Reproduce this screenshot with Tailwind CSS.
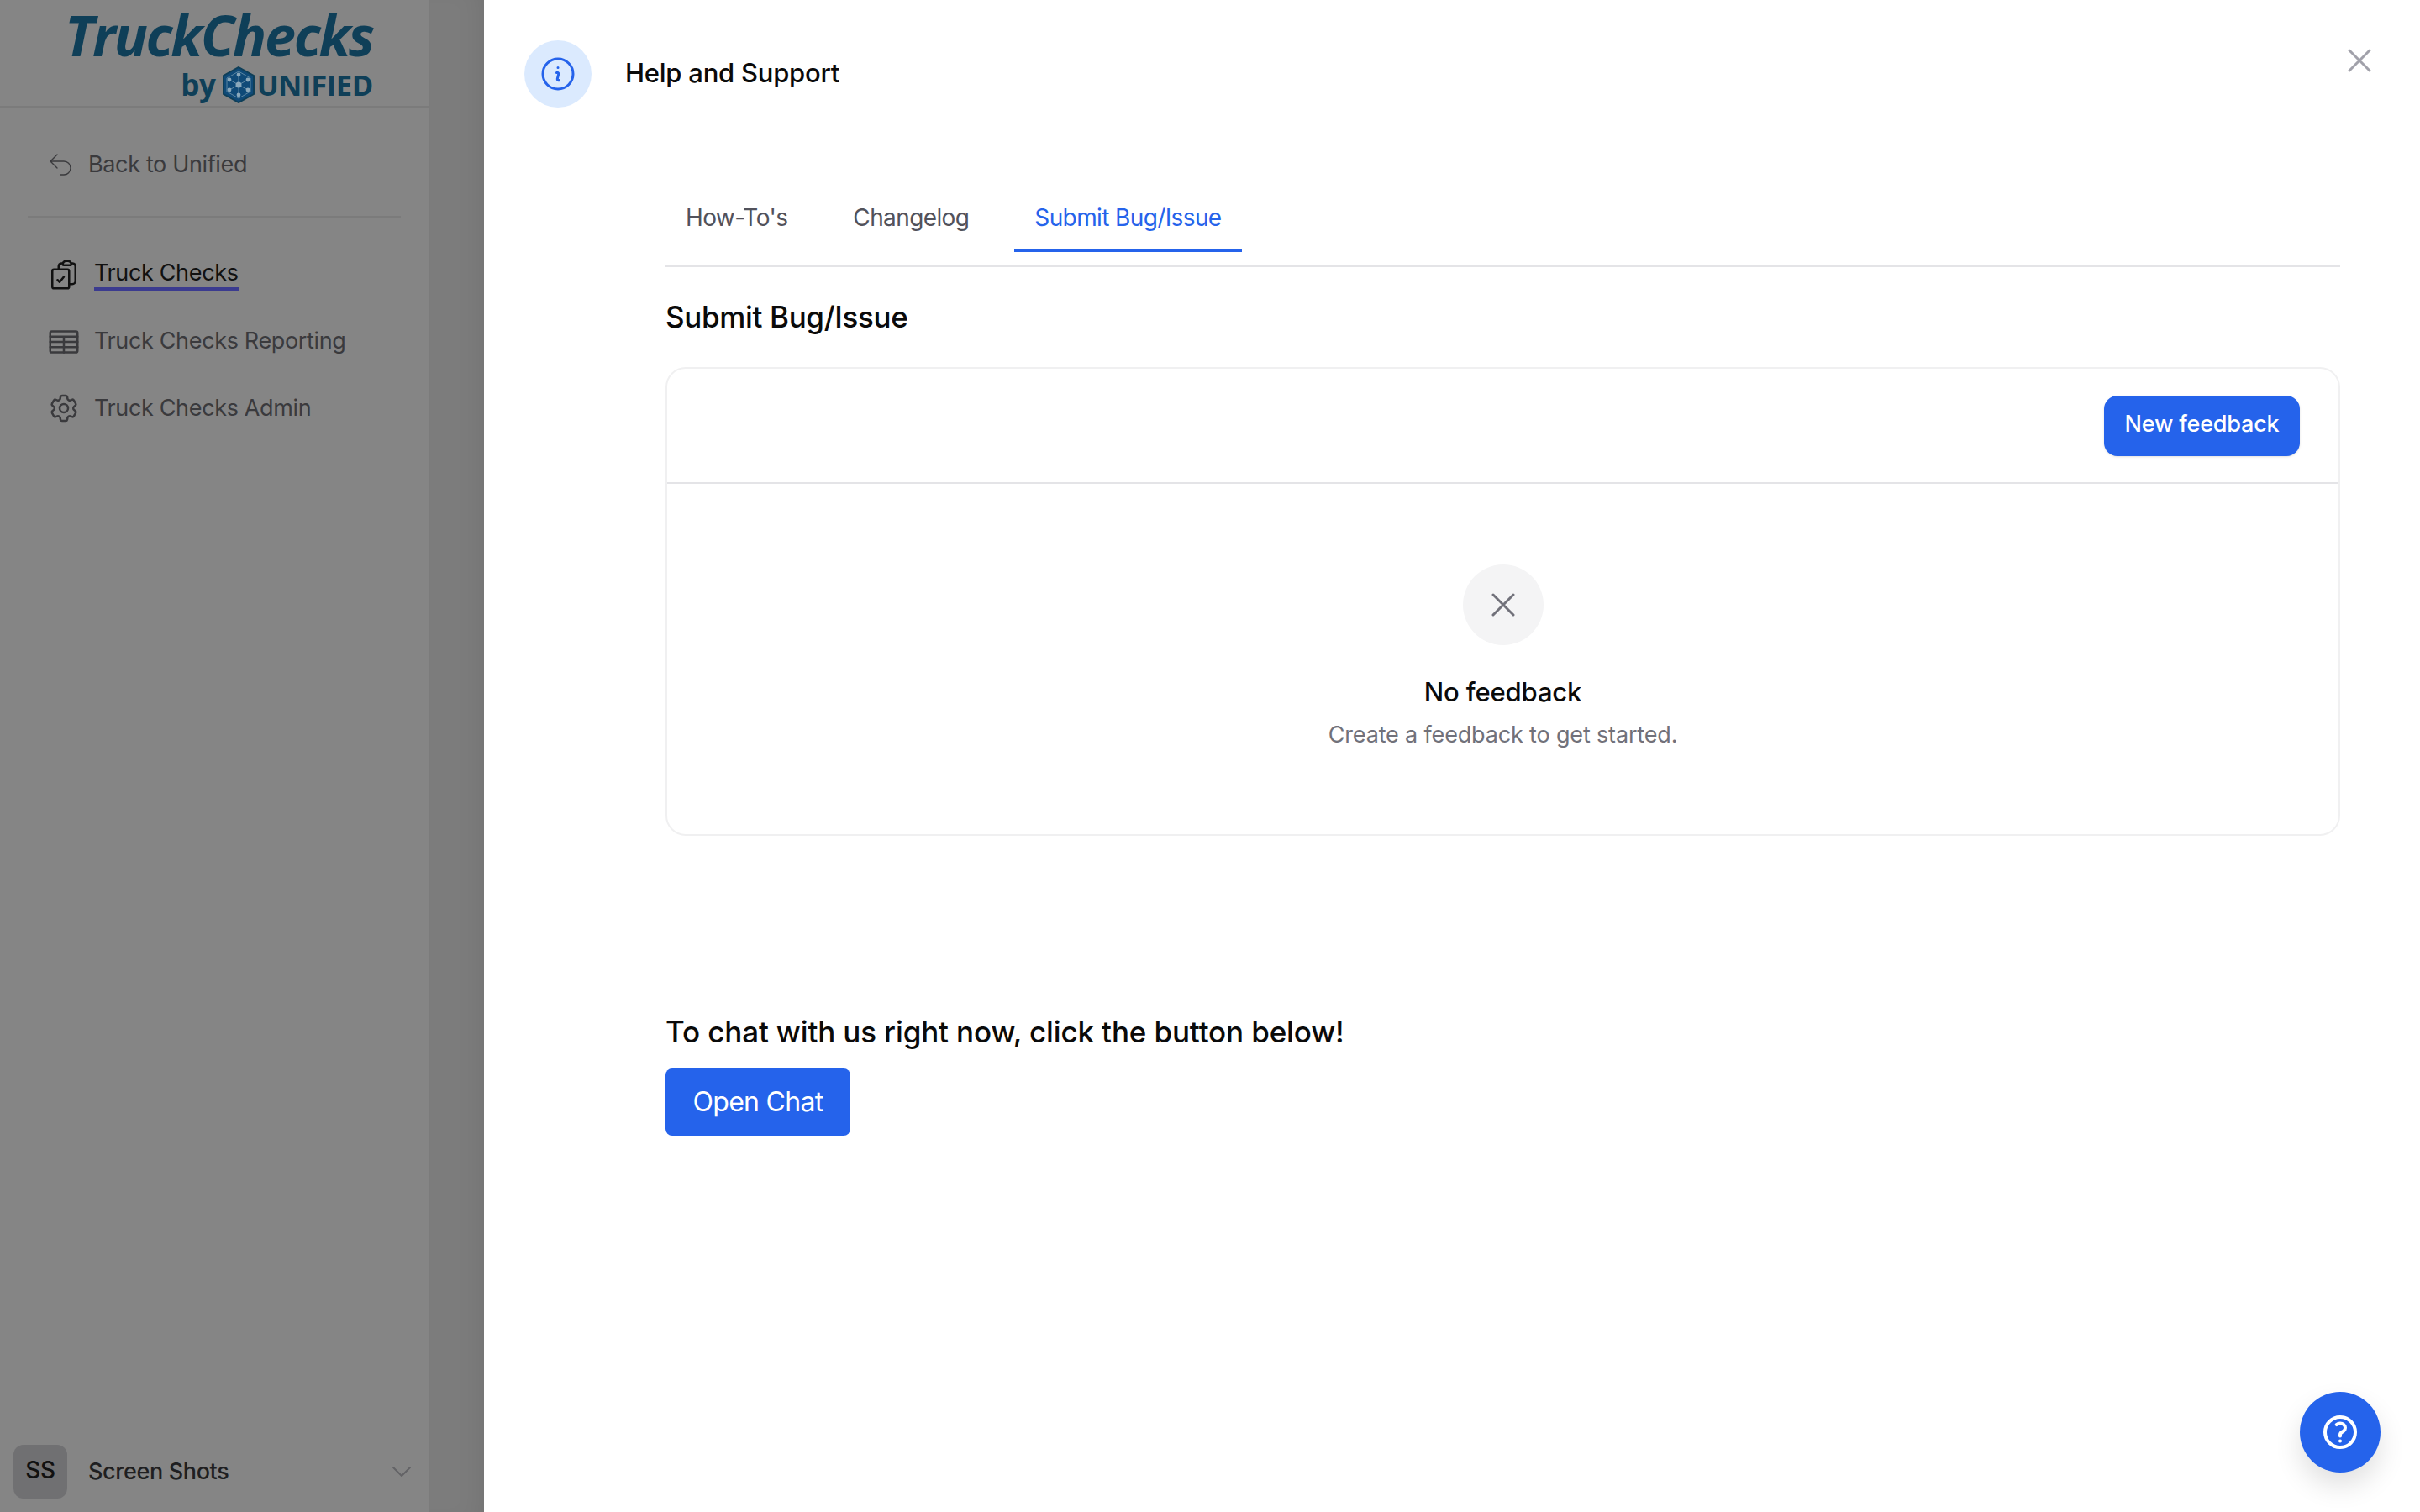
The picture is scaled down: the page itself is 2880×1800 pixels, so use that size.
<!DOCTYPE html>
<html lang="en">
  <head>
    <meta charset="UTF-8" />
    <title>Help and Support</title>
    <script src="https://cdn.jsdelivr.net/npm/@tailwindcss/browser@4"></script>
  </head>
  <body class="[font-family:Inter,sans-serif] tracking-[-0.022em]">
    <div class="relative flex h-[1800px] w-[2880px] overflow-hidden bg-white">
      <!-- sidebar (dimmed) -->
      <aside class="flex h-full w-[512px] shrink-0 flex-col border-r-2 border-[#7b7b7b] bg-[#858585]">
        <div class="flex h-[128px] shrink-0 flex-col items-end border-b-2 border-[#7b7b7b] pr-[66px]">
          <div class="mt-[10px] h-[62px] text-[66.5px] leading-[62px] font-bold italic tracking-[-0.035em] text-[#0f3f58] [font-family:'Open_Sans',sans-serif]">TruckChecks</div>
          <div class="mt-[7px] flex h-[44px] items-center text-[#0f3f58]">
            <span class="text-[35px] leading-[44px] font-bold tracking-[-0.01em] [font-family:'Open_Sans',sans-serif]">by</span>
            <svg viewBox="0 0 40 44" class="mr-[0px] ml-[5px] h-[44px] w-[44px]">
              <path d="M20 1 38 11v22L20 43 2 33V11Z" fill="#0f4a78" stroke="#0f3f58" stroke-width="2" />
              <path d="M20 6 34 14v16l-14 8-14-8V14Z" fill="none" stroke="#5d87a3" stroke-width="1" />
              <g stroke="#5d87a3" stroke-width="1"><path d="M20 22V10M20 22v12M20 22 9 16M20 22l11-6M20 22 9 28M20 22l11 6" /></g>
              <g fill="#8aa8bb"><circle cx="20" cy="22" r="3.5" /><circle cx="20" cy="10" r="2.4" /><circle cx="20" cy="34" r="2.4" /><circle cx="9" cy="16" r="2.4" /><circle cx="31" cy="16" r="2.4" /><circle cx="9" cy="28" r="2.4" /><circle cx="31" cy="28" r="2.4" /></g>
            </svg>
            <span class="text-[34.5px] leading-[44px] font-bold tracking-[-0.01em] [font-family:'Open_Sans',sans-serif]">UNIFIED</span>
          </div>
        </div>

        <a class="mt-[48px] flex h-[40px] items-center pl-[56px] text-[27px] text-[#3a3a3d]">
          <svg viewBox="0 0 24 24" fill="none" stroke="currentColor" stroke-width="1" stroke-linecap="round" stroke-linejoin="round" class="h-[32px] w-[32px] shrink-0"><path d="M9 15 3 9m0 0 6-6M3 9h12a6 6 0 0 1 0 12h-3" /></svg>
          <span class="ml-[17px]">Back to Unified</span>
        </a>

        <div class="mx-[33px] mt-[41px] h-[2px] bg-[#7b7b7b]"></div>

        <nav class="mt-[48px] flex flex-col gap-[39.5px] text-[27px] text-[#3a3a3d]">
          <a class="flex h-[40px] items-center pl-[56px] text-[#111111]">
            <svg viewBox="0 0 24 24" fill="none" stroke="currentColor" stroke-width="1.5" stroke-linecap="round" stroke-linejoin="round" class="h-[40px] w-[40px] shrink-0"><path d="M11.35 3.836c-.065.21-.1.433-.1.664 0 .414.336.75.75.75h4.5a.75.75 0 0 0 .75-.75 2.25 2.25 0 0 0-.1-.664m-5.8 0A2.251 2.251 0 0 1 13.5 2.25H15c1.012 0 1.867.668 2.15 1.586m-5.8 0c-.376.023-.75.05-1.124.08C9.095 4.01 8.25 4.973 8.25 6.108V8.25m8.9-4.414c.376.023.75.05 1.124.08 1.131.094 1.976 1.057 1.976 2.192V16.5A2.25 2.25 0 0 1 18 18.75h-2.25m-7.5-10.5H4.875c-.621 0-1.125.504-1.125 1.125v11.25c0 .621.504 1.125 1.125 1.125h9.75c.621 0 1.125-.504 1.125-1.125V18.75m-7.5-10.5h6.375c.621 0 1.125.504 1.125 1.125v9.375m-8.25-3 1.5 1.5 3-3.75" /></svg>
            <span class="ml-[16px] border-b-4 border-[#3b3b8f] leading-[34px]">Truck Checks</span>
          </a>
          <a class="flex h-[40px] items-center pl-[56px]">
            <svg viewBox="0 0 24 24" fill="none" stroke="currentColor" stroke-width="1.5" stroke-linecap="round" stroke-linejoin="round" class="h-[40px] w-[40px] shrink-0"><rect x="2.25" y="4.5" width="19.5" height="15" rx="1.1" /><path d="M2.25 8.25h19.5M2.25 12h19.5M2.25 15.75h19.5M12 8.25V19.5" /></svg>
            <span class="ml-[16px]">Truck Checks Reporting</span>
          </a>
          <a class="flex h-[40px] items-center pl-[56px]">
            <svg viewBox="0 0 24 24" fill="none" stroke="currentColor" stroke-width="1.5" stroke-linecap="round" stroke-linejoin="round" class="h-[40px] w-[40px] shrink-0"><path d="M9.594 3.94c.09-.542.56-.94 1.11-.94h2.593c.55 0 1.02.398 1.11.94l.213 1.281c.063.374.313.686.645.87.074.04.147.083.22.127.325.196.72.257 1.075.124l1.217-.456a1.125 1.125 0 0 1 1.37.49l1.296 2.247a1.125 1.125 0 0 1-.26 1.431l-1.003.827c-.293.241-.438.613-.43.992a7.723 7.723 0 0 1 0 .255c-.008.378.137.75.43.991l1.004.827c.424.35.534.955.26 1.43l-1.298 2.247a1.125 1.125 0 0 1-1.369.491l-1.217-.456c-.355-.133-.75-.072-1.076.124a6.47 6.47 0 0 1-.22.128c-.331.183-.581.495-.644.869l-.213 1.281c-.09.543-.56.94-1.11.94h-2.594c-.55 0-1.019-.398-1.11-.94l-.213-1.281c-.062-.374-.312-.686-.644-.87a6.52 6.52 0 0 1-.22-.127c-.325-.196-.72-.257-1.076-.124l-1.217.456a1.125 1.125 0 0 1-1.369-.49l-1.297-2.247a1.125 1.125 0 0 1 .26-1.431l1.004-.827c.292-.24.437-.613.43-.991a6.932 6.932 0 0 1 0-.255c.007-.38-.138-.751-.43-.992l-1.004-.827a1.125 1.125 0 0 1-.26-1.43l1.297-2.247a1.125 1.125 0 0 1 1.37-.491l1.216.456c.356.133.751.072 1.076-.124.072-.044.146-.086.22-.128.332-.183.582-.495.644-.869l.214-1.28Z" /><path d="M15 12a3 3 0 1 1-6 0 3 3 0 0 1 6 0Z" /></svg>
            <span class="ml-[16px]">Truck Checks Admin</span>
          </a>
        </nav>

        <div class="mt-auto mb-[16px] flex h-[64px] items-center pl-[16px] pr-[16px]">
          <div class="flex h-[64px] w-[64px] items-center justify-center rounded-[12px] bg-[#707072] pb-[4px] text-[28px] font-medium text-[#111111]">SS</div>
          <span class="ml-[25px] text-[27px] font-medium text-[#1f1f21]">Screen Shots</span>
          <svg viewBox="0 0 24 24" fill="none" stroke="#636366" stroke-width="1.5" stroke-linecap="round" stroke-linejoin="round" class="ml-auto h-[32px] w-[32px]"><path d="m19.5 8.25-7.5 7.5-7.5-7.5" /></svg>
        </div>
      </aside>

      <!-- what is left of the page behind the panel -->
      <div class="w-[64px] shrink-0 bg-[#7c7c7c] shadow-[inset_-24px_0_30px_-20px_rgba(0,0,0,0.08)]"></div>

      <!-- help panel -->
      <main class="relative flex-1 bg-white">
        <div class="mt-[48px] flex h-[80px] items-center pl-[48px]">
          <div class="flex h-[80px] w-[80px] items-center justify-center rounded-full bg-[#dbeafe] text-[#2563eb]">
            <svg viewBox="0 0 24 24" fill="none" stroke="currentColor" stroke-width="1.5" stroke-linecap="round" stroke-linejoin="round" class="h-[48px] w-[48px]"><path d="m11.25 11.25.041-.02a.75.75 0 0 1 1.063.852l-.708 2.836a.75.75 0 0 0 1.063.853l.041-.021M21 12a9 9 0 1 1-18 0 9 9 0 0 1 18 0Zm-9-3.75h.008v.008H12V8.25Z" /></svg>
          </div>
          <h2 class="ml-[40px] pb-[2px] text-[31px] font-medium tracking-[-0.008em] text-[#0a0a0a]">Help and Support</h2>
        </div>

        <button class="absolute top-[48px] right-[48px] text-[#a1a1aa]">
          <svg viewBox="0 0 24 24" fill="none" stroke="currentColor" stroke-width="1.5" stroke-linecap="round" stroke-linejoin="round" class="h-[48px] w-[48px]"><path d="M6 18 18 6M6 6l12 12" /></svg>
        </button>

        <div class="mt-[90px] ml-[216px] w-[1993px]">
          <div class="flex h-[100px] gap-[30px] border-b-2 border-[#e4e4e7] text-[28px] tracking-[-0.022em] text-[#52525b]">
            <a class="flex h-[82px] items-start px-[24px] pt-[20px]">How-To's</a>
            <a class="flex h-[82px] items-start px-[24px] pt-[20px]">Changelog</a>
            <a class="flex h-[82px] items-start border-b-4 border-[#2563eb] px-[24px] pt-[20px] text-[#2563eb]">Submit Bug/Issue</a>
          </div>

          <h3 class="mt-[35px] text-[35px] leading-[48px] font-medium tracking-[-0.01em] text-[#0a0a0a]">Submit Bug/Issue</h3>

          <div class="mt-[36px] h-[558px] rounded-[24px] border-2 border-[#f0f0f1]">
            <div class="flex h-[137px] items-start justify-end border-b-2 border-[#e4e4e7] pt-[32px] pr-[46px]">
              <button class="h-[72px] w-[233px] rounded-[16px] bg-[#2563eb] pb-[3px] text-[27px] font-medium tracking-[-0.007em] text-white shadow-sm">New feedback</button>
            </div>
            <div class="flex flex-col items-center pt-[96px]">
              <div class="flex h-[96px] w-[96px] items-center justify-center rounded-full bg-[#f4f4f5] text-[#71717a]">
                <svg viewBox="0 0 24 24" fill="none" stroke="currentColor" stroke-width="1.5" stroke-linecap="round" stroke-linejoin="round" class="h-[48px] w-[48px]"><path d="M6 18 18 6M6 6l12 12" /></svg>
              </div>
              <div class="mt-[32px] text-[31px] leading-[48px] font-medium tracking-[-0.005em] text-[#0a0a0a]">No feedback</div>
              <div class="mt-[7px] text-[27px] leading-[40px] tracking-[-0.006em] text-[#71717a]">Create a feedback to get started.</div>
            </div>
          </div>

          <h3 class="mt-[209px] text-[35px] leading-[48px] font-medium tracking-[-0.004em] text-[#0a0a0a]">To chat with us right now, click the button below!</h3>
          <button class="mt-[20px] h-[80px] w-[220px] rounded-[8px] bg-[#2563eb] text-[32px] tracking-[-0.022em] text-white">Open Chat</button>
        </div>

        <button class="absolute right-[47px] bottom-[47px] flex h-[96px] w-[96px] items-center justify-center rounded-full bg-[#2563eb] text-white shadow-[0_16px_32px_rgba(0,0,0,0.12)]">
          <svg viewBox="0 0 24 24" fill="none" stroke="currentColor" stroke-width="2" stroke-linecap="round" stroke-linejoin="round" class="h-[48px] w-[48px]"><path d="M9.879 7.519c1.171-1.025 3.071-1.025 4.242 0 1.172 1.025 1.172 2.687 0 3.712-.203.179-.43.326-.67.442-.745.361-1.45.999-1.45 1.827v.75M21 12a9 9 0 1 1-18 0 9 9 0 0 1 18 0Zm-9 5.25h.008v.008H12v-.008Z" /></svg>
        </button>
      </main>
    </div>
  </body>
</html>
